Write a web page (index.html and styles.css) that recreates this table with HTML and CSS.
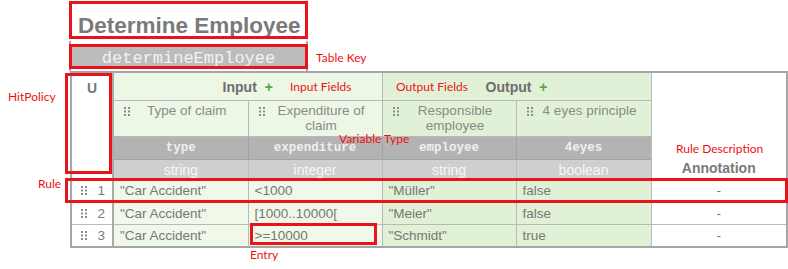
FILE: index.html
```html
<!DOCTYPE html>
<html>
<head>
<meta charset="utf-8">
<link rel="stylesheet" href="styles.css">
</head>
<body>
<div class="page">
  <div class="title">Determine Employee</div>
  <div class="key-wrap"><div class="key">determineEmployee</div></div>
  <table class="dt">
    <colgroup>
      <col class="c-hit"><col class="c-in1"><col class="c-in2"><col class="c-out1"><col class="c-out2"><col class="c-ann">
    </colgroup>
    <thead>
      <tr class="r-group">
        <th rowspan="4" class="hit">U</th>
        <th colspan="2" class="grp in">Input <span class="plus">+</span></th>
        <th colspan="2" class="grp out">Output <span class="plus">+</span></th>
        <th rowspan="4" class="ann">Annotation</th>
      </tr>
      <tr class="r-label">
        <th class="lbl in"><div class="lbl-in"><svg class="handle" viewBox="0 0 7 10" width="7" height="10"><rect x="0" y="0" width="2" height="2"/><rect x="4" y="0" width="2" height="2"/><rect x="0" y="3.5" width="2" height="2"/><rect x="4" y="3.5" width="2" height="2"/><rect x="0" y="7" width="2" height="2"/><rect x="4" y="7" width="2" height="2"/></svg><span class="lbl-text">Type of claim</span></div></th>
        <th class="lbl in"><div class="lbl-in"><svg class="handle" viewBox="0 0 7 10" width="7" height="10"><rect x="0" y="0" width="2" height="2"/><rect x="4" y="0" width="2" height="2"/><rect x="0" y="3.5" width="2" height="2"/><rect x="4" y="3.5" width="2" height="2"/><rect x="0" y="7" width="2" height="2"/><rect x="4" y="7" width="2" height="2"/></svg><span class="lbl-text">Expenditure of claim</span></div></th>
        <th class="lbl out"><div class="lbl-in"><svg class="handle" viewBox="0 0 7 10" width="7" height="10"><rect x="0" y="0" width="2" height="2"/><rect x="4" y="0" width="2" height="2"/><rect x="0" y="3.5" width="2" height="2"/><rect x="4" y="3.5" width="2" height="2"/><rect x="0" y="7" width="2" height="2"/><rect x="4" y="7" width="2" height="2"/></svg><span class="lbl-text">Responsible employee</span></div></th>
        <th class="lbl out"><div class="lbl-in"><svg class="handle" viewBox="0 0 7 10" width="7" height="10"><rect x="0" y="0" width="2" height="2"/><rect x="4" y="0" width="2" height="2"/><rect x="0" y="3.5" width="2" height="2"/><rect x="4" y="3.5" width="2" height="2"/><rect x="0" y="7" width="2" height="2"/><rect x="4" y="7" width="2" height="2"/></svg><span class="lbl-text">4 eyes principle</span></div></th>
      </tr>
      <tr class="r-var">
        <th>type</th><th>expenditure</th><th>employee</th><th>4eyes</th>
      </tr>
      <tr class="r-type">
        <th>string</th><th>integer</th><th>string</th><th>boolean</th>
      </tr>
    </thead>
    <tbody>
      <tr>
        <td class="num"><div class="num-in"><svg class="handle" viewBox="0 0 7 10" width="7" height="10"><rect x="0" y="0" width="2" height="2"/><rect x="4" y="0" width="2" height="2"/><rect x="0" y="3.5" width="2" height="2"/><rect x="4" y="3.5" width="2" height="2"/><rect x="0" y="7" width="2" height="2"/><rect x="4" y="7" width="2" height="2"/></svg><span>1</span></div></td>
        <td class="in">"Car Accident"</td><td class="in">&lt;1000</td><td class="out">"Müller"</td><td class="out">false</td><td class="anno">-</td>
      </tr>
      <tr>
        <td class="num"><div class="num-in"><svg class="handle" viewBox="0 0 7 10" width="7" height="10"><rect x="0" y="0" width="2" height="2"/><rect x="4" y="0" width="2" height="2"/><rect x="0" y="3.5" width="2" height="2"/><rect x="4" y="3.5" width="2" height="2"/><rect x="0" y="7" width="2" height="2"/><rect x="4" y="7" width="2" height="2"/></svg><span>2</span></div></td>
        <td class="in">"Car Accident"</td><td class="in">[1000..10000[</td><td class="out">"Meier"</td><td class="out">false</td><td class="anno">-</td>
      </tr>
      <tr>
        <td class="num"><div class="num-in"><svg class="handle" viewBox="0 0 7 10" width="7" height="10"><rect x="0" y="0" width="2" height="2"/><rect x="4" y="0" width="2" height="2"/><rect x="0" y="3.5" width="2" height="2"/><rect x="4" y="3.5" width="2" height="2"/><rect x="0" y="7" width="2" height="2"/><rect x="4" y="7" width="2" height="2"/></svg><span>3</span></div></td>
        <td class="in">"Car Accident"</td><td class="in">&gt;=10000</td><td class="out">"Schmidt"</td><td class="out">true</td><td class="anno">-</td>
      </tr>
    </tbody>
  </table>

  <div class="mark box-title"></div>
  <div class="mark box-key"></div>
  <div class="mark box-hit"></div>
  <div class="mark box-rule"></div>
  <div class="mark box-entry"></div>

  <span class="note n-key">Table Key</span>
  <span class="note n-hit">HitPolicy</span>
  <span class="note n-inf">Input Fields</span>
  <span class="note n-outf">Output Fields</span>
  <span class="note n-var">Variable Type</span>
  <span class="note n-desc">Rule Description</span>
  <span class="note n-rule">Rule</span>
  <span class="note n-entry">Entry</span>
</div>
</body>
</html>
```

FILE: styles.css
```css
html, body {
  margin: 0;
  padding: 0;
  background: #ffffff;
}
.page {
  position: relative;
  width: 788px;
  height: 269px;
  padding-left: 70px;
  box-sizing: border-box;
  font-family: "Liberation Sans", Arial, sans-serif;
  color: #777;
}
.title {
  height: 41px;
  box-sizing: border-box;
  padding: 12px 0 0 8px;
  font-size: 22.5px;
  line-height: 28px;
  font-weight: bold;
  color: #7a7a7a;
  white-space: nowrap;
}
.key-wrap {
  width: 239px;
  height: 30px;
  box-sizing: border-box;
  margin-left: -1px;
  border-left: 2px solid #a9a9a9;
  border-right: 2px solid #a9a9a9;
  padding-top: 6px;
}
.key {
  height: 20px;
  overflow: hidden;
  box-sizing: border-box;
  padding-top: 2px;
  background: #bcbcbc;
  color: #f2f2f2;
  font-family: "Liberation Mono", "Courier New", monospace;
  font-size: 17px;
  line-height: 20px;
  text-align: center;
}
.dt {
  border-collapse: collapse;
  table-layout: fixed;
  width: 716px;
  border: 2px solid #a6a6a6;
  font-size: 13.5px;
}
.c-hit { width: 42px; }
.c-in1 { width: 135px; }
.c-in2 { width: 134px; }
.c-out1 { width: 134px; }
.c-out2 { width: 135px; }
.c-ann { width: 136px; }
.dt th, .dt td {
  border: 1px solid #b9b9b9;
  padding: 0;
}
.dt th {
  font-weight: normal;
}
.hit {
  background: #fff;
  vertical-align: top;
  font-weight: bold !important;
  font-size: 14px;
  color: #777;
  padding-top: 7px !important;
  border-right: 2px solid #aaa !important;
  line-height: 16px;
}
.ann {
  background: #fff;
  vertical-align: bottom;
  font-weight: bold !important;
  font-size: 14px;
  color: #7a7a7a;
  padding-bottom: 3px !important;
  line-height: 16px;
}
.r-group th.grp {
  height: 27px;
  font-weight: bold;
  font-size: 14px;
  color: #6e6e6e;
  text-align: center;
  line-height: 16px;
}
.grp.in { background: #edf7e6; }
.grp.out { background: #e1f1d7; }
.plus {
  color: #5aa83a;
  margin-left: 4px;
}
.r-label th {
  height: 35px;
  vertical-align: top;
  color: #8a8a8a;
  font-size: 13.5px;
  line-height: 15px;
}
.lbl.in { background: #edf7e6; }
.lbl.out { background: #e1f1d7; }
.lbl-in {
  display: flex;
  align-items: flex-start;
  padding: 2px 5px 0 10px;
}
.handle {
  flex: none;
  fill: #8c8c8c;
  margin-top: 4px;
}
.lbl-text {
  flex: 1;
  text-align: center;
}
.r-var th {
  height: 22px;
  background: #b3b3b3;
  color: #efefef;
  font-family: "Liberation Mono", "Courier New", monospace;
  font-weight: bold;
  font-size: 12.5px;
  text-align: center;
  border-color: #a3a3a3;
}
.r-type th {
  height: 19px;
  background: #cfcfcf;
  color: #f7f7f7;
  font-size: 14px;
  text-align: center;
  border-color: #bdbdbd;
  line-height: 16px;
}
.dt tbody td {
  height: 21px;
  line-height: 16px;
  color: #777;
}
.dt tbody tr:first-child td { height: 22px; }
td.in {
  background: #eff8e9;
  padding-left: 6px;
}
td.out {
  background: #e0f1d6;
  padding-left: 6px;
}
td.anno {
  background: #fff;
  text-align: center;
  color: #aaa;
}
td.num {
  background: #fff;
  border-right: 2px solid #aaa;
}
.num-in {
  display: flex;
  align-items: center;
  justify-content: space-between;
  padding: 0 7px 0 9px;
  color: #7a7a7a;
}
.num-in .handle { margin-top: 0; }

.mark {
  position: absolute;
  border: 3px solid #e8131b;
  box-sizing: border-box;
}
.box-title { left: 69px; top: 1px; width: 239px; height: 38px; }
.box-key { left: 69px; top: 44px; width: 239px; height: 25px; }
.box-hit { left: 65px; top: 73px; width: 47px; height: 101px; }
.box-rule { left: 65px; top: 178px; width: 723px; height: 25px; }
.box-entry { left: 250px; top: 223px; width: 127px; height: 22px; }

.note {
  position: absolute;
  font-family: Lato, "Open Sans", sans-serif;
  font-size: 12px;
  line-height: 14px;
  color: #ee1111;
  white-space: nowrap;
}
.n-key { left: 316px; top: 51px; }
.n-hit { left: 8px; top: 90px; }
.n-inf { left: 290px; top: 80px; }
.n-outf { left: 396px; top: 80px; }
.n-var { left: 339px; top: 132px; }
.n-desc { left: 676px; top: 142px; }
.n-rule { left: 38px; top: 177px; }
.n-entry { left: 250px; top: 248px; }
```
